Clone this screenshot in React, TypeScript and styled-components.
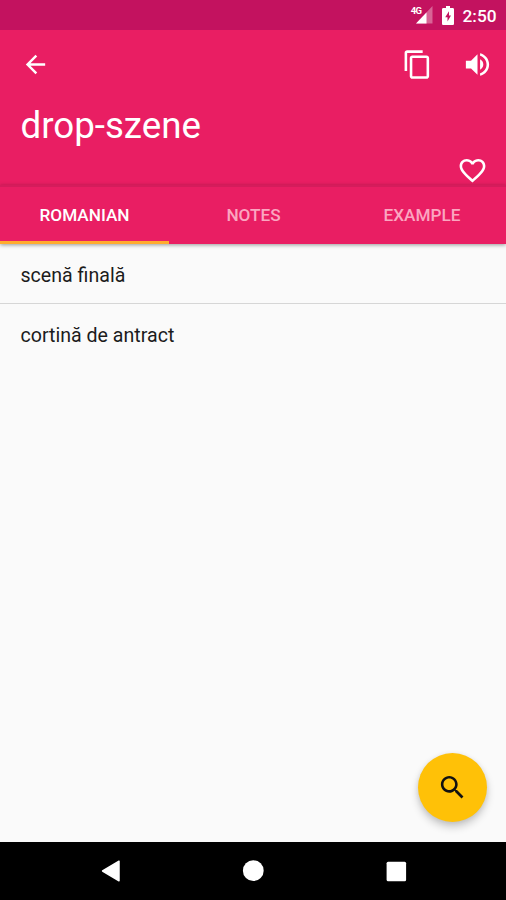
import React from "react";
import styled, { createGlobalStyle } from "styled-components";

const GlobalStyle = createGlobalStyle`
  * { box-sizing: border-box; }
  html, body { margin: 0; padding: 0; }
  body { font-family: Roboto, "Noto Sans", sans-serif; overflow: hidden; }
  svg { display: block; flex: none; }
`;

const Screen = styled.div`
  position: relative;
  display: flex;
  flex-direction: column;
  width: 506px;
  height: 900px;
  background: #fafafa;
`;

const StatusBar = styled.div`
  display: flex;
  align-items: center;
  justify-content: flex-end;
  height: 30px;
  padding-right: 9.5px;
  background: #c3125f;
  color: #fff;
`;

const Clock = styled.span`
  width: 34px;
  margin-left: 9px;
  padding-top: 2px;
  font-size: 17.3px;
  line-height: 20px;
  font-weight: 500;
  white-space: nowrap;
`;

const Header = styled.header`
  display: flex;
  flex-direction: column;
  height: 155px;
  background: #e91e63;
  color: #fff;
`;

const Toolbar = styled.div`
  display: flex;
  flex: none;
  align-items: center;
  height: 69px;
  padding: 0 13.5px 0 20.5px;
`;

const IconButton = styled.button<{ $gap?: number; $push?: boolean }>`
  display: flex;
  padding: 0;
  border: 0;
  background: none;
  color: inherit;
  margin-left: ${({ $gap, $push }) => ($push ? "auto" : `${$gap ?? 0}px`)};
`;

const Title = styled.h1`
  flex: none;
  margin: 3px 0 0 20.5px;
  font-size: 36.7px;
  line-height: 48px;
  font-weight: 400;
`;

const FavoriteRow = styled.div`
  display: flex;
  flex: none;
  justify-content: flex-end;
  margin-top: 5px;
  padding-right: 18px;
`;

const Tabs = styled.nav`
  position: relative;
  z-index: 1;
  display: grid;
  grid-template-columns: 169px 169px 168px;
  height: 59px;
  border-top: 2px solid #d51c5c;
  background: #e91e63;
  box-shadow: 0 1px 4px rgba(0, 0, 0, 0.4);
`;

const Tab = styled.button<{ $active?: boolean }>`
  padding: 2px 0 0;
  border: 0;
  border-bottom: 3px solid ${({ $active }) => ($active ? "#ffab2e" : "transparent")};
  background: none;
  color: ${({ $active }) => ($active ? "#fff" : "#fba6c0")};
  font: 500 17.2px/20px Roboto, sans-serif;
`;

const List = styled.ul`
  flex: 1;
  margin: 0;
  padding: 0;
  list-style: none;
`;

const Item = styled.li<{ $divided?: boolean }>`
  display: flex;
  align-items: center;
  height: ${({ $divided }) => ($divided ? 60 : 61)}px;
  padding: ${({ $divided }) => ($divided ? 4 : 3)}px 20.5px 0;
  border-bottom: ${({ $divided }) => ($divided ? "1px solid #d6d6d6" : "0")};
  color: #1c1c1c;
  font-size: 19.6px;
  line-height: 24px;
`;

const SearchFab = styled.button`
  position: absolute;
  right: 19px;
  bottom: 78px;
  display: flex;
  align-items: center;
  justify-content: center;
  width: 69px;
  height: 69px;
  padding: 0;
  border: 0;
  border-radius: 50%;
  background: #ffc107;
  color: #111;
  box-shadow: 0 5px 8px rgba(0, 0, 0, 0.2), 0 1px 5px rgba(0, 0, 0, 0.08);
`;

const NavBar = styled.footer`
  display: flex;
  align-items: center;
  justify-content: space-between;
  height: 58px;
  padding: 0 99.5px 0 101px;
  background: #000;
`;

const icons = {
  back: "M20 11H7.83l5.59-5.59L12 4l-8 8 8 8 1.41-1.41L7.83 13H20v-2z",
  copy: "M16 1H4c-1.1 0-2 .9-2 2v14h2V3h12V1zm3 4H8c-1.1 0-2 .9-2 2v14c0 1.1.9 2 2 2h11c1.1 0 2-.9 2-2V7c0-1.1-.9-2-2-2zm0 16H8V7h11v14z",
  volume:
    "M3 9v6h4l5 5V4L7 9H3zm13.5 3c0-1.77-1.02-3.29-2.5-4.03v8.05c1.48-.73 2.5-2.25 2.5-4.02zM14 3.23v2.06c2.89.86 5 3.54 5 6.71s-2.11 5.85-5 6.71v2.06c4.01-.91 7-4.49 7-8.77s-2.99-7.86-7-8.77z",
  heart:
    "M16.5 3c-1.74 0-3.41.81-4.5 2.09C10.91 3.81 9.24 3 7.5 3 4.42 3 2 5.42 2 8.5c0 3.78 3.4 6.86 8.55 11.54L12 21.35l1.45-1.32C18.6 15.36 22 12.28 22 8.5 22 5.42 19.58 3 16.5 3zm-4.4 15.55l-.1.1-.1-.1C7.14 14.24 4 11.39 4 8.5 4 6.5 5.5 5 7.5 5c1.54 0 3.04.99 3.57 2.36h1.87C13.46 5.99 14.96 5 16.5 5c2 0 3.5 1.5 3.5 3.5 0 2.89-3.14 5.74-7.9 10.05z",
  search:
    "M15.5 14h-.79l-.28-.27C15.41 12.59 16 11.11 16 9.5 16 5.91 13.09 3 9.5 3S3 5.91 3 9.5 5.91 16 9.5 16c1.61 0 3.09-.59 4.23-1.57l.27.28v.79l5 4.99L20.49 19l-4.99-5zm-6 0C7.01 14 5 11.99 5 9.5S7.01 5 9.5 5 14 7.01 14 9.5 11.99 14 9.5 14z",
};

const Icon = ({ name, size }: { name: keyof typeof icons; size: number }) => (
  <svg width={size} height={size} viewBox="0 0 24 24" fill="currentColor">
    <path d={icons[name]} />
  </svg>
);

const NetworkLabel = styled.span`
  align-self: flex-start;
  margin: 6px -6px 0 0;
  font-size: 9.5px;
  line-height: 10px;
  font-weight: 700;
  letter-spacing: -0.6px;
`;

const SignalIcon = () => (
  <svg width="17" height="18" viewBox="0 0 17 18">
    <path d="M16.5 0v17.5H0z" fill="#fff" opacity=".35" />
    <path d="M10.5 6.4v11.1H0z" fill="#fff" />
  </svg>
);

const BatterySvg = styled.svg`
  margin-left: 9px;
`;

const BatteryIcon = () => (
  <BatterySvg width="12" height="19" viewBox="0 0 12 19">
    <path
      fill="#fff"
      fillRule="evenodd"
      d="M4 0h4v2h2.7c.7 0 1.3.6 1.3 1.3v14.4c0 .7-.6 1.3-1.3 1.3H1.3C.6 19 0 18.4 0 17.7V3.3C0 2.6.6 2 1.3 2H4zM7 5.2 3.2 11.2h2.3v4.4l3.5-6.2H7z"
    />
  </BatterySvg>
);

const tabs = ["ROMANIAN", "NOTES", "EXAMPLE"];
const translations = ["scenă finală", "cortină de antract"];

export default function App() {
  return (
    <>
      <GlobalStyle />
      <Screen>
        <StatusBar>
          <NetworkLabel>4G</NetworkLabel>
          <SignalIcon />
          <BatteryIcon />
          <Clock>2:50</Clock>
        </StatusBar>
        <Header>
          <Toolbar>
            <IconButton aria-label="Back"><Icon name="back" size={29} /></IconButton>
            <IconButton aria-label="Copy" $push><Icon name="copy" size={31} /></IconButton>
            <IconButton aria-label="Listen" $gap={29}><Icon name="volume" size={31} /></IconButton>
          </Toolbar>
          <Title>drop-szene</Title>
          <FavoriteRow>
            <IconButton aria-label="Favorite"><Icon name="heart" size={31} /></IconButton>
          </FavoriteRow>
        </Header>
        <Tabs>
          {tabs.map((label, i) => (
            <Tab key={label} $active={i === 0}>{label}</Tab>
          ))}
        </Tabs>
        <List>
          {translations.map((text, i) => (
            <Item key={text} $divided={i === 0}>{text}</Item>
          ))}
        </List>
        <NavBar>
          <svg width="20" height="22" viewBox="0 0 20 22">
            <path d="M18 1.2v19.6L1.6 11z" fill="#fff" stroke="#fff" strokeWidth="1.5" strokeLinejoin="round" />
          </svg>
          <svg width="22" height="22" viewBox="0 0 22 22">
            <circle cx="11.3" cy="10.7" r="10.4" fill="#fff" />
          </svg>
          <svg width="21" height="21" viewBox="0 0 21 21">
            <rect x="0.6" y="0.8" width="19.5" height="19.5" rx="1.5" fill="#fff" />
          </svg>
        </NavBar>
        <SearchFab aria-label="Search"><Icon name="search" size={31} /></SearchFab>
      </Screen>
    </>
  );
}
